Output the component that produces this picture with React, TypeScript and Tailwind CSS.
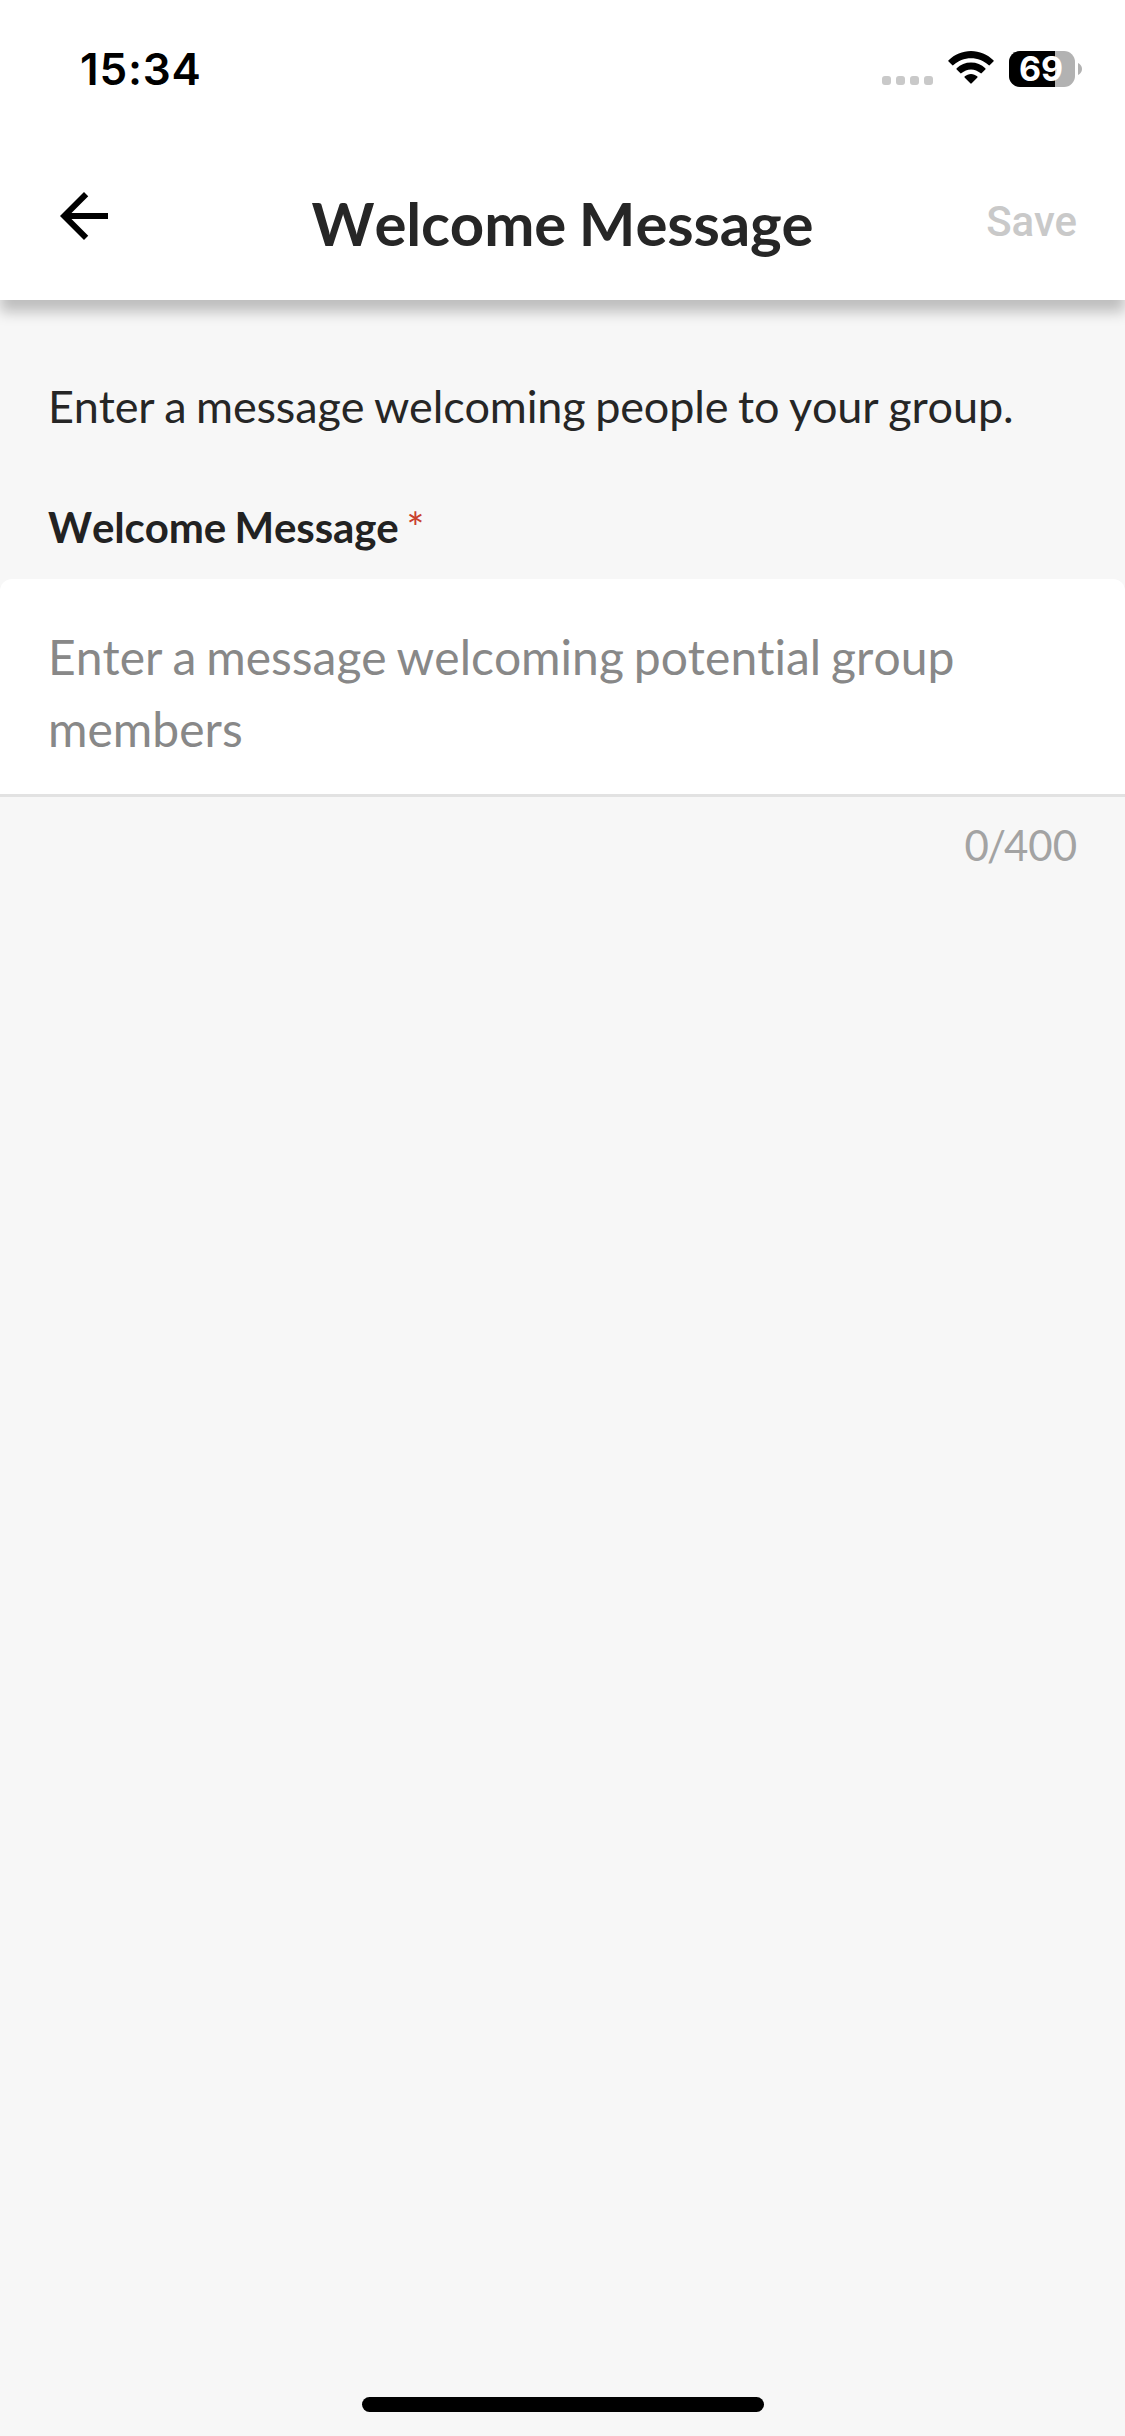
import { ReactNode } from 'react';

const MAX_LENGTH = 400;

const SignalDots = () => (
	<div className="flex gap-[5px] mt-[25px]">
		{[1, 2, 3, 4].map((i) => (
			<span key={i} className="size-[9px] rounded-[3px] bg-[#c9c9c9]" />
		))}
	</div>
);

const WifiIcon = () => (
	<svg className="w-[46px] h-[34px] ml-[15px]" viewBox="0 0 46 34" fill="black">
		<path d="M.6 10.6a1 1 0 0 1 0-1.4C6.6 3.500 14.500 0 23 0s16.400 3.500 22.400 9.200a1 1 0 0 1 0 1.400l-3.500 3.500a1 1 0 0 1-1.400 0C35.800 9.700 29.700 7.200 23 7.200S10.200 9.700 5.500 14.100a1 1 0 0 1-1.400 0z" />
		<path d="M8.700 18.600a1 1 0 0 1 0-1.400C12.500 13.600 17.500 11.600 23 11.600s10.500 2 14.300 5.600a1 1 0 0 1 0 1.400l-3.500 3.500a1 1 0 0 1-1.400 0C29.900 19.800 26.600 18.400 23 18.400s-6.900 1.400-9.400 3.700a1 1 0 0 1-1.400 0z" />
		<path d="M16.800 26.800a1 1 0 0 1 0-1.500C18.500 23.800 20.600 22.900 23 22.900s4.500.9 6.200 2.400a1 1 0 0 1 0 1.500l-5.500 5.500a1 1 0 0 1-1.400 0z" />
	</svg>
);

const Battery = ({ level }: { level: number }) => (
	<div className="flex items-center ml-[15px]">
		<div className="relative w-[66px] h-9 rounded-[11px] bg-[#b2b2b2]">
			<div className="h-full rounded-l-[11px] bg-black" style={{ width: `${level}%` }} />
			<span className="absolute left-0 -top-1 w-16 h-11 text-center font-['Inter',sans-serif] text-[34px] leading-[44px] font-bold text-white">
				{level}
			</span>
		</div>
		<svg className="w-1 h-3 ml-[3px]" viewBox="0 0 4 12" fill="#b2b2b2">
			<path d="M0 0c2.400 1 4 3.400 4 6s-1.600 5-4 6z" />
		</svg>
	</div>
);

const StatusBar = () => (
	<div className="h-[132px] pl-20 pr-[43px] pt-[51px] flex items-start justify-between">
		<span className="font-['Inter',sans-serif] text-[44px] leading-9 font-semibold tracking-[0.8px] text-black">
			15:34
		</span>
		<div className="flex items-start">
			<SignalDots />
			<WifiIcon />
			<Battery level={69} />
		</div>
	</div>
);

const Header = ({ title }: { title: string }) => (
	<header className="relative h-[300px] bg-white shadow-[0_12px_13px_rgba(0,0,0,0.23)]">
		<StatusBar />
		<div className="h-[168px] px-12 grid grid-cols-[160px_1fr_160px]">
			<button aria-label="Back" className="self-start mt-12">
				<svg className="size-[72px]" viewBox="0 0 24 24" fill="black">
					<path d="M20 11H7.830l5.590-5.590L12 4l-8 8 8 8 1.410-1.410L7.830 13H20z" />
				</svg>
			</button>
			<h1 className="mt-[55px] text-center text-[60px] leading-[72px] font-bold tracking-[-0.15px] text-[#262626] whitespace-nowrap">
				{title}
			</h1>
			<button
				disabled
				className="self-start mt-[63px] text-right font-['Roboto',sans-serif] text-[42px] leading-[54px] font-medium [font-kerning:normal] text-[#c9c9c9]"
			>
				Save
			</button>
		</div>
	</header>
);

const Field = ({ label, value, children }: { label: string; value: string; children: ReactNode }) => (
	<section className="mt-[61px]">
		<div className="px-12 flex gap-2 text-[42px] leading-[60px] text-[#222]">
			<span className="font-bold tracking-[-0.13px]">{label}</span>
			<span className="text-[#c9402e]">*</span>
		</div>
		<div className="mt-[22px] h-[218px] px-12 pt-[42px] rounded-t-xl bg-white border-b-[3px] border-[#e2e2e2] text-[48px] leading-[72px] [word-spacing:-0.05em] text-[#888]">
			{children}
		</div>
		<div className="mt-[18px] px-12 text-right text-[42px] leading-[60px] text-[#a3a3a3]">
			{value.length}
			<span className="-mx-0.5">/</span>
			{MAX_LENGTH}
		</div>
	</section>
);

export default function App() {
	return (
		<div className="w-[1125px] h-[2436px] flex flex-col bg-[#f7f7f7] font-['Lato',sans-serif] [font-kerning:none] [font-variant-ligatures:none] [word-spacing:-1.7px] overflow-hidden">
			<Header title="Welcome Message" />
			<main className="flex-1 pt-[76px]">
				<p className="px-12 text-[45px] leading-[60px] tracking-[-0.16px] text-[#262626] whitespace-nowrap">
					Enter a message welcoming people to your group.
				</p>
				<Field label="Welcome Message" value="">
					Enter a message welcoming potential group members
				</Field>
			</main>
			<div className="w-[402px] h-[15px] mb-6 mx-auto rounded-full bg-black" />
		</div>
	);
}
